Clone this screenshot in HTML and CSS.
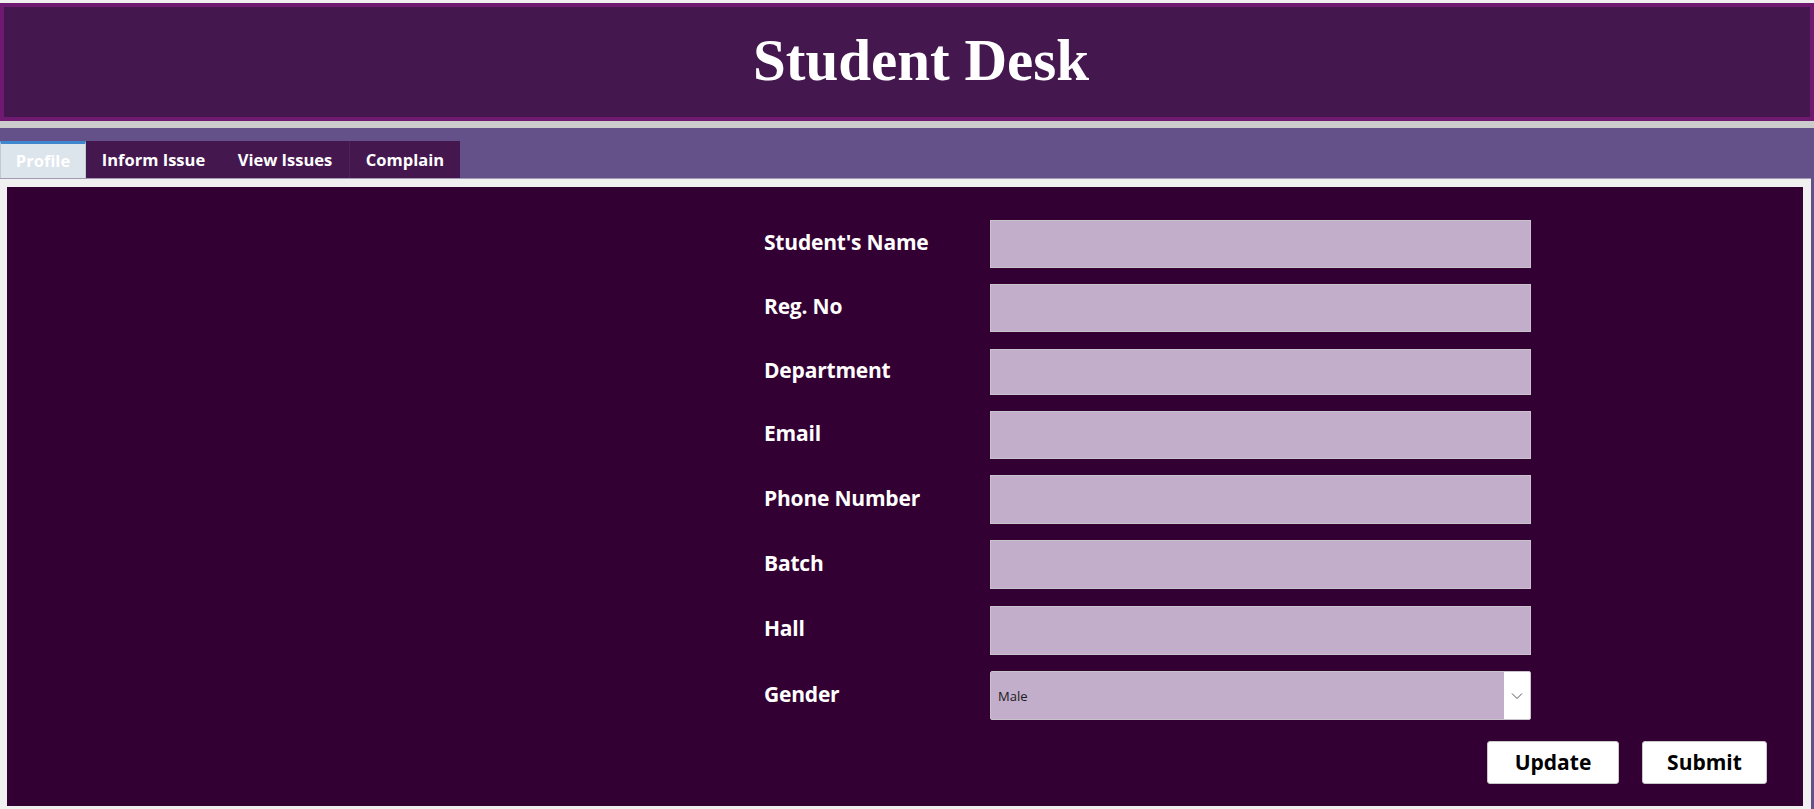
FILE: index.html
```html
<!DOCTYPE html>
<html lang="en">
<head>
<meta charset="utf-8">
<title>Student Desk</title>
<link rel="stylesheet" href="styles.css">
</head>
<body>
<div class="page">
  <header class="banner">
    <h1 class="banner-title">Student Desk</h1>
  </header>
  <div class="divider"></div>
  <nav class="tabbar">
    <div class="tab tab-active tab-profile">Profile</div>
    <div class="tab tab-inform">Inform Issue</div>
    <div class="tab tab-view">View Issues</div>
    <div class="tab tab-complain">Complain</div>
  </nav>
  <div class="workarea">
    <div class="panel">
      <div class="content">
        <form class="form">
          <label class="label">Student's Name</label><div class="field"></div>
          <label class="label">Reg. No</label><div class="field"></div>
          <label class="label">Department</label><div class="field"></div>
          <label class="label">Email</label><div class="field"></div>
          <label class="label">Phone Number</label><div class="field"></div>
          <label class="label">Batch</label><div class="field"></div>
          <label class="label">Hall</label><div class="field"></div>
          <label class="label">Gender</label>
          <div class="field select">
            <span class="select-value">Male</span>
            <span class="select-arrow">
              <svg width="12" height="8" viewBox="0 0 12 8"><path d="M1 1.5 L6 6.5 L11 1.5" fill="none" stroke="#555" stroke-width="1"/></svg>
            </span>
          </div>
        </form>
        <div class="actions">
          <button class="btn btn-update" type="button">Update</button>
          <button class="btn btn-submit" type="button">Submit</button>
        </div>
      </div>
    </div>
  </div>
</div>
</body>
</html>
```

FILE: styles.css
```css
* { box-sizing: border-box; }
html, body { margin: 0; padding: 0; }
body {
  background: #f0f0f0;
  font-family: "Open Sans", "Noto Sans", sans-serif;
  overflow: hidden;
}
.page {
  height: 809px;
  display: flex;
  flex-direction: column;
  padding-top: 3px;
}
.banner {
  height: 118px;
  background: #45174f;
  border: 4px solid #6f1a70;
  display: flex;
  align-items: center;
  justify-content: center;
  flex-shrink: 0;
}
.banner-title {
  margin: 0;
  font-family: "Liberation Serif", "Times New Roman", serif;
  font-weight: bold;
  font-size: 59px;
  line-height: 1;
  color: #ffffff;
  padding-left: 28px;
  padding-bottom: 3px;
}
.divider {
  height: 7px;
  background: #cccccc;
  flex-shrink: 0;
}
.tabbar {
  height: 50px;
  background: #645189;
  display: flex;
  align-items: flex-end;
  flex-shrink: 0;
}
.tab {
  height: 37px;
  background: #45174f;
  color: #ffffff;
  font-weight: bold;
  font-size: 16.5px;
  display: flex;
  align-items: center;
  justify-content: center;
  padding-bottom: 1px;
}
.tab-active {
  background: #dce4ec;
  border-top: 3px solid #3f88cf;
  border-left: 1px solid #c4c8d0;
  border-right: 1px solid #c4c8d0;
  color: #ffffff;
}
.tab-profile { width: 86px; }
.tab-inform { width: 135px; }
.tab-view { width: 128px; }
.tab-complain { width: 111px; border-left: 1px solid #512060; }
.workarea {
  flex: 1;
  background: #645189;
  display: flex;
  padding-right: 3px;
}
.panel {
  flex: 1;
  background: #f0f0f0;
  border-top: 1px solid #a39bb5;
  padding: 8px 8px 3px 7px;
  display: flex;
}
.content {
  flex: 1;
  background: #330033;
  padding: 33px 36px 0 757px;
  display: flex;
  flex-direction: column;
}
.form {
  display: grid;
  grid-template-columns: 226px 541px;
  grid-template-rows: 48px 48px 46px 48px 49px 49px 49px 49px;
  row-gap: 16.3px;
  margin: 0;
}
.label {
  color: #ffffff;
  font-weight: bold;
  font-size: 21px;
  display: flex;
  align-items: center;
  letter-spacing: -0.2px;
  padding-bottom: 4px;
}
.field {
  background: #c2adca;
  border: 1px solid #c9c4cc;
}
.select {
  display: flex;
  align-items: center;
  border-radius: 2px;
  overflow: hidden;
}
.select-value {
  flex: 1;
  font-family: "Open Sans", "Noto Sans", sans-serif;
  font-size: 13px;
  color: #1a1a1a;
  padding-left: 7px;
}
.select-arrow {
  width: 26px;
  height: 100%;
  background: #ffffff;
  display: flex;
  align-items: center;
  justify-content: center;
}
.actions {
  display: flex;
  justify-content: flex-end;
  gap: 23px;
  margin-top: 20.5px;
}
.btn {
  height: 43px;
  background: #ffffff;
  border: 1px solid #c8c8c8;
  border-radius: 3px;
  font-family: "Open Sans", "Noto Sans", sans-serif;
  font-weight: bold;
  font-size: 21px;
  color: #000000;
  padding: 0;
}
.btn-update { width: 132px; }
.btn-submit { width: 125px; }
```
